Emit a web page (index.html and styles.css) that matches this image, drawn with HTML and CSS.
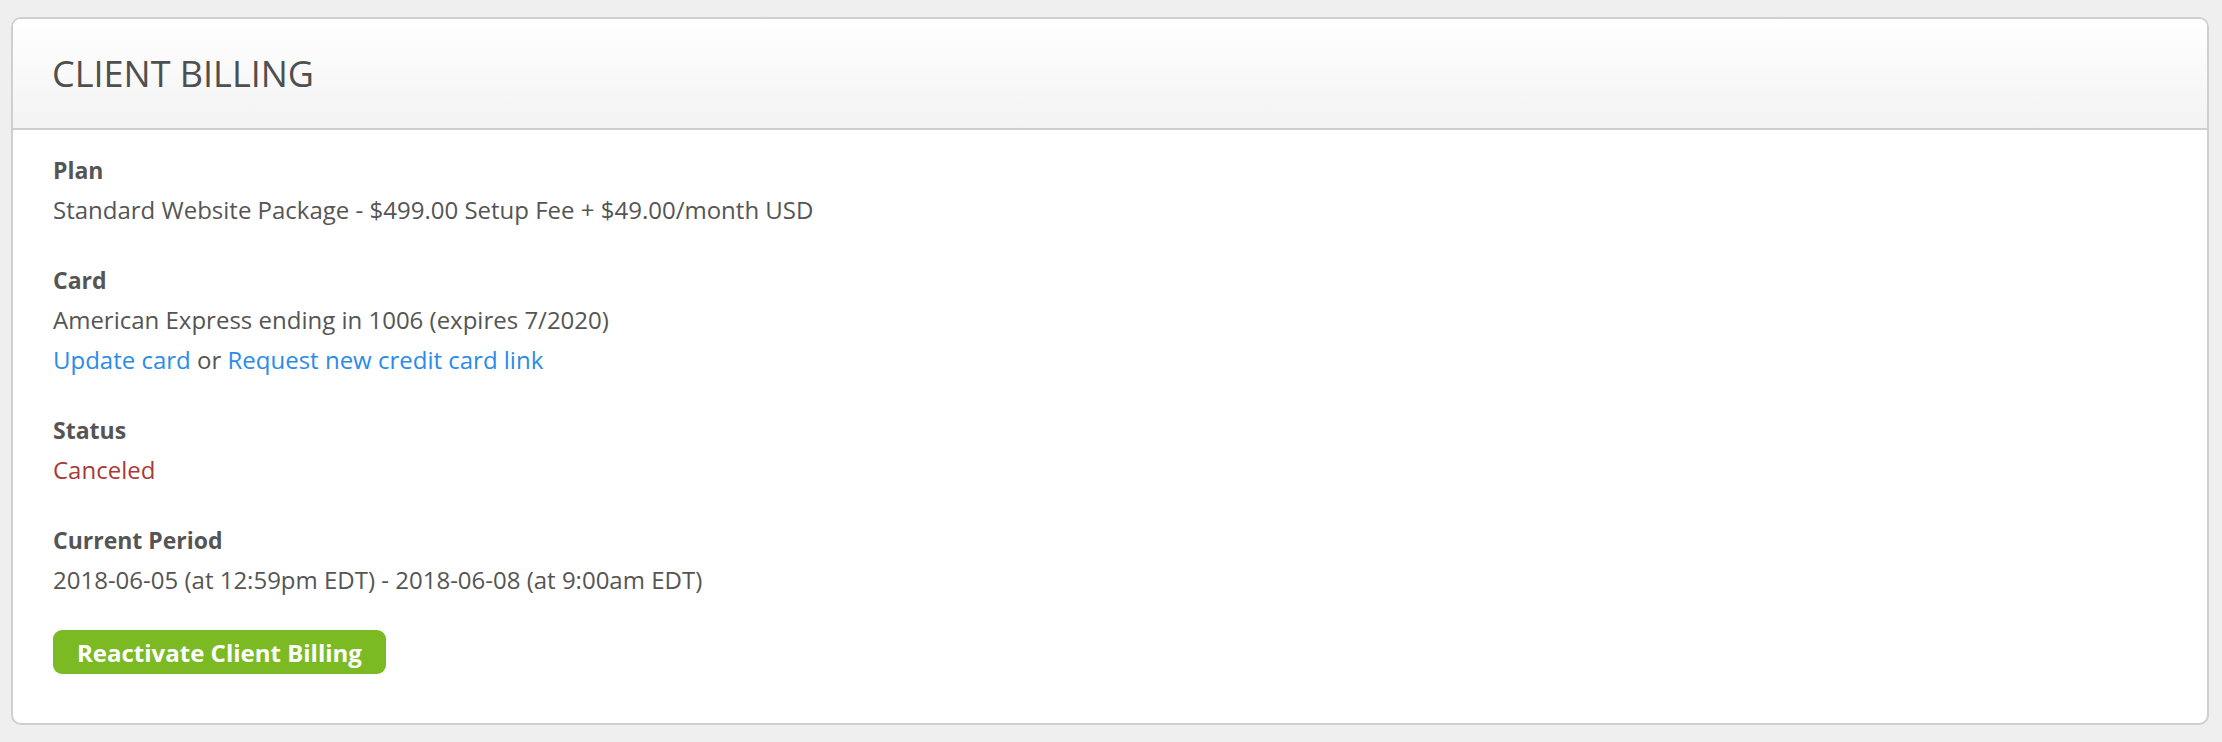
FILE: index.html
```html
<!DOCTYPE html>
<html lang="en">
<head>
    <meta charset="UTF-8">
    <title>Client Billing</title>
    <link rel="stylesheet" href="styles.css">
</head>
<body>
    <section class="panel">
        <header class="panel-head">
            <h2>CLIENT BILLING</h2>
        </header>
        <div class="panel-body">
            <div class="field">
                <div class="label">Plan</div>
                <div class="value">Standard Website Package - $499.00 Setup Fee + $49.00/month USD</div>
            </div>
            <div class="field">
                <div class="label">Card</div>
                <div class="value">American Express ending in 1006 (expires 7/2020)</div>
                <div class="value"><a href="#">Update card</a> or <a href="#">Request new credit card link</a></div>
            </div>
            <div class="field">
                <div class="label">Status</div>
                <div class="value canceled">Canceled</div>
            </div>
            <div class="field">
                <div class="label">Current Period</div>
                <div class="value">2018-06-05 (at 12:59pm EDT) - 2018-06-08 (at 9:00am EDT)</div>
            </div>
            <button class="btn-green">Reactivate Client Billing</button>
        </div>
    </section>
</body>
</html>
```

FILE: styles.css
```css
body { margin: 0; padding: 17px 13px 18px 11px; background: #efefef; font-family: "Open Sans", sans-serif; color: #555; }
.panel { background: #fff; border: 2px solid #cfcfcf; border-radius: 10px; box-sizing: border-box; height: 708px; }
.panel-head { height: 109px; border-bottom: 2px solid #cfcfcf; border-radius: 8px 8px 0 0; background: linear-gradient(#ffffff, #f3f3f3); display: flex; align-items: center; padding: 0 39px; }
.panel-head h2 { margin: 0; font-weight: 400; font-size: 36px; color: #4f4f4f; }
.panel-body { padding: 20px 40px; }
.field { margin-bottom: 30px; }
.label { font-weight: 700; font-size: 23px; line-height: 40px; color: #555; }
.value { font-size: 24px; line-height: 40px; }
.value a { color: #2a8ce6; text-decoration: none; }
.canceled { color: #a93a3a; }
.btn-green { display: block; margin-top: 0; background: #7cba24; color: #fff; border: none; border-radius: 9px; font-family: "Open Sans", sans-serif; font-weight: 700; font-size: 24px; height: 44px; padding: 0 24px; cursor: pointer; }
```
